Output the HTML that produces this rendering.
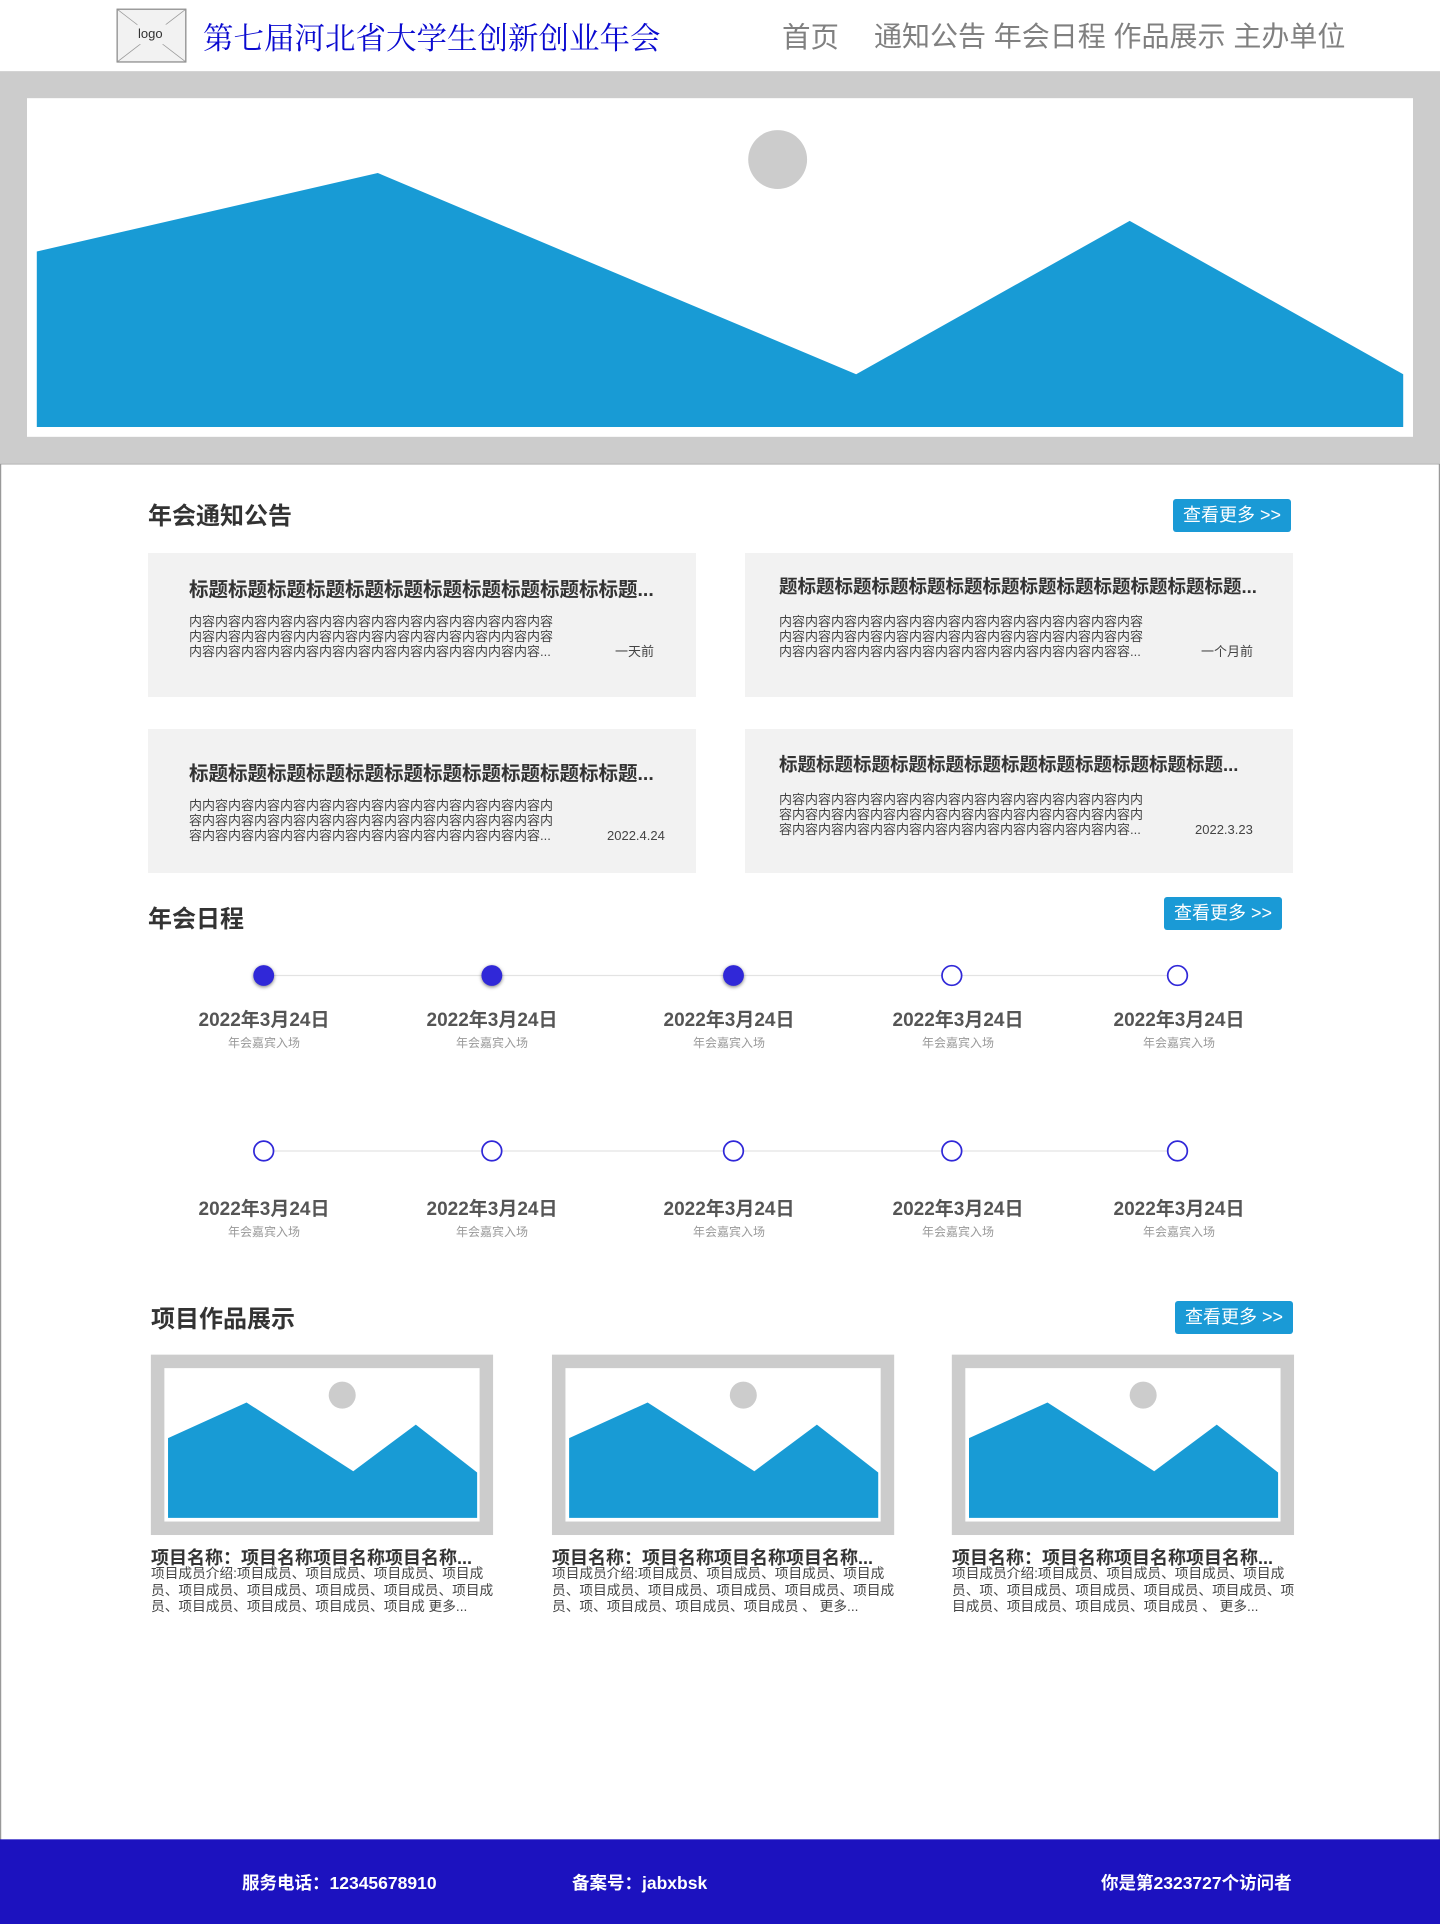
<!DOCTYPE html>
<html><head><meta charset="utf-8"><style>
*{margin:0;padding:0;box-sizing:border-box}
body{width:1440px;height:1924px;position:relative;background:#fff;font-family:"Liberation Sans","Noto Sans CJK SC",sans-serif;overflow:hidden}
.a{position:absolute;white-space:nowrap}
.h2{font-size:24px;font-weight:bold;color:#333;line-height:30px}
.btn{background:#1a9ad6;color:#fff;font-size:18px;border-radius:3px;text-align:center;line-height:33px}
.card{background:#f2f2f2;position:absolute;width:548px;height:144px}
.ct{position:absolute;left:41px;font-size:19.5px;font-weight:bold;color:#333;white-space:nowrap}
.cc{position:absolute;left:41px;font-size:13px;line-height:15px;color:#444;white-space:nowrap}
.tm{position:absolute;font-size:13px;color:#444;white-space:nowrap}
.d{position:absolute;width:170px;text-align:center;font-size:19px;font-weight:bold;color:#555;line-height:22px}
.s{position:absolute;width:170px;text-align:center;font-size:12px;color:#999;line-height:14px}
.pt{font-size:18px;font-weight:bold;color:#333}
.pd{font-size:13.7px;line-height:16.5px;color:#444;width:345px;white-space:normal}
.f{color:#fff;font-weight:bold;font-size:17.5px;line-height:20px}
</style></head><body>
<svg class="a" style="left:0;top:0" width="1440" height="1924" viewBox="0 0 1174 1568" preserveAspectRatio="none">
<rect x="95.5" y="7.5" width="56" height="43" fill="#f2f2f2" stroke="#888"/>
<line x1="95.5" y1="7.5" x2="151.5" y2="50.5" stroke="#999" stroke-width="0.6"/>
<line x1="151.5" y1="7.5" x2="95.5" y2="50.5" stroke="#999" stroke-width="0.6"/>
<rect x="112" y="20" width="24" height="16" fill="#f2f2f2"/>
<rect x="0.5" y="378" width="1173" height="1122" fill="none" stroke="#999" stroke-width="1"/>
<rect x="0" y="58" width="1174" height="320" fill="#ccc"/>
<rect x="22" y="80" width="1130" height="276" fill="#fff"/>
<polygon points="30,205 308,141 698,305 921,180 1144,305 1144,348 30,348" fill="#189bd5"/>
<circle cx="634" cy="130" r="24" fill="#ccc"/>
<line x1="215" y1="795" x2="960" y2="795" stroke="#e3e3e3" stroke-width="1"/>
<line x1="215" y1="938" x2="960" y2="938" stroke="#e3e3e3" stroke-width="1"/>
<g fill="#3028d8" style="filter:drop-shadow(0 1px 1.5px rgba(0,0,0,.5))">
<circle cx="215" cy="795" r="8.5"/><circle cx="401" cy="795" r="8.5"/><circle cx="598" cy="795" r="8.5"/></g>
<g fill="#fff" stroke="#3028d8" stroke-width="1.4">
<circle cx="776" cy="795" r="8"/><circle cx="960" cy="795" r="8"/>
<circle cx="215" cy="938" r="8"/><circle cx="401" cy="938" r="8"/><circle cx="598" cy="938" r="8"/><circle cx="776" cy="938" r="8"/><circle cx="960" cy="938" r="8"/></g>
<g id="im"><rect x="123" y="1104" width="279" height="147" fill="#ccc"/><rect x="134" y="1115" width="257" height="125" fill="#fff"/>
<polygon points="137,1172 201,1143 288,1199 339,1161 389,1200 389,1237 137,1237" fill="#189bd5"/><circle cx="279" cy="1137" r="11" fill="#ccc"/></g>
<use href="#im" x="327"/><use href="#im" x="653"/>
<rect x="0" y="1499" width="1174" height="69" fill="#1c12bf"/>
</svg>
<div class="a" style="left:138px;top:26px;font-size:13px;color:#333">logo</div>
<div class="a" style="left:203px;top:14px;font-size:30.5px;color:#0a0ad0;font-family:'Liberation Serif','Noto Serif CJK SC',serif">第七届河北省大学生创新创业年会</div>
<div class="a" style="left:782px;top:15px;font-size:28.5px;color:#808080">首页</div>
<div class="a" style="left:874px;top:15px;font-size:28px;color:#808080">通知公告 年会日程 作品展示 主办单位</div>

<div class="a h2" style="left:148px;top:502px">年会通知公告</div>
<div class="a btn" style="left:1173px;top:499px;width:118px">查看更多 &gt;&gt;</div>
<div class="card" style="left:148px;top:553px"><div class="ct" style="top:20px">标题标题标题标题标题标题标题标题标题标题标标题...</div><div class="cc" style="top:61px">内容内容内容内容内容内容内容内容内容内容内容内容内容内容<br>内容内容内容内容内内容内容内容内容内容内容内容内内容内容<br>内容内容内容内容内容内容内容内容内容内容内容内内容内容...</div><div class="tm" style="left:467px;top:88px">一天前</div></div>
<div class="card" style="left:745px;top:553px"><div class="ct" style="left:34px;top:20px;font-size:18.5px">题标题标题标题标题标题标题标题标题标题标题标题标题...</div><div class="cc" style="left:34px;top:61px">内容内容内容内容内容内容内容内容内容内容内容内容内容内容<br>内容内容内容内容内容内容内容内容内容内容内容内容内容内容<br>内容内容内容内容内容内容内容内容内容内容内容内容内容容...</div><div class="tm" style="left:456px;top:88px">一个月前</div></div>
<div class="card" style="left:148px;top:729px"><div class="ct" style="top:28px">标题标题标题标题标题标题标题标题标题标题标标题...</div><div class="cc" style="top:69px">内内容内容内容内容内容内容内容内容内容内容内容内容内容内<br>容内容内容内容内容内容内容内容内容内容内容内容内容内容内<br>容内容内容内容内容内容内容内容内容内容内容内容内容内容...</div><div class="tm" style="left:459px;top:99px">2022.4.24</div></div>
<div class="card" style="left:745px;top:729px"><div class="ct" style="left:34px;top:22px;font-size:18.5px">标题标题标题标题标题标题标题标题标题标题标题标题...</div><div class="cc" style="left:34px;top:63px">内容内容内容内容内容内容内容内容内容内容内容内容内容内内<br>容内容内容内容内容内容内容内容内容内容内容内容内容内容内<br>容内容内容内容内容内容内容内容内容内容内容内容内容内容...</div><div class="tm" style="left:450px;top:93px">2022.3.23</div></div>

<div class="a h2" style="left:148px;top:905px">年会日程</div>
<div class="a btn" style="left:1164px;top:897px;width:118px">查看更多 &gt;&gt;</div>

<div class="d" style="left:179px;top:1010px">2022年3月24日</div><div class="s" style="left:179px;top:1036px">年会嘉宾入场</div>
<div class="d" style="left:407px;top:1010px">2022年3月24日</div><div class="s" style="left:407px;top:1036px">年会嘉宾入场</div>
<div class="d" style="left:644px;top:1010px">2022年3月24日</div><div class="s" style="left:644px;top:1036px">年会嘉宾入场</div>
<div class="d" style="left:873px;top:1010px">2022年3月24日</div><div class="s" style="left:873px;top:1036px">年会嘉宾入场</div>
<div class="d" style="left:1094px;top:1010px">2022年3月24日</div><div class="s" style="left:1094px;top:1036px">年会嘉宾入场</div>
<div class="d" style="left:179px;top:1199px">2022年3月24日</div><div class="s" style="left:179px;top:1225px">年会嘉宾入场</div>
<div class="d" style="left:407px;top:1199px">2022年3月24日</div><div class="s" style="left:407px;top:1225px">年会嘉宾入场</div>
<div class="d" style="left:644px;top:1199px">2022年3月24日</div><div class="s" style="left:644px;top:1225px">年会嘉宾入场</div>
<div class="d" style="left:873px;top:1199px">2022年3月24日</div><div class="s" style="left:873px;top:1225px">年会嘉宾入场</div>
<div class="d" style="left:1094px;top:1199px">2022年3月24日</div><div class="s" style="left:1094px;top:1225px">年会嘉宾入场</div>

<div class="a h2" style="left:151px;top:1305px">项目作品展示</div>
<div class="a btn" style="left:1175px;top:1301px;width:118px">查看更多 &gt;&gt;</div>

<div class="a pt" style="left:151px;top:1544px">项目名称：项目名称项目名称项目名称...</div>
<div class="a pd" style="left:151px;top:1566px">项目成员介绍:项目成员、项目成员、项目成员、项目成员、项目成员、项目成员、项目成员、项目成员、项目成员、项目成员、项目成员、项目成员、项目成 更多...</div>
<div class="a pt" style="left:552px;top:1544px">项目名称：项目名称项目名称项目名称...</div>
<div class="a pd" style="left:552px;top:1566px">项目成员介绍:项目成员、项目成员、项目成员、项目成员、项目成员、项目成员、项目成员、项目成员、项目成员、项、项目成员、项目成员、项目成员 、 更多...</div>
<div class="a pt" style="left:952px;top:1544px">项目名称：项目名称项目名称项目名称...</div>
<div class="a pd" style="left:952px;top:1566px">项目成员介绍:项目成员、项目成员、项目成员、项目成员、项、项目成员、项目成员、项目成员、项目成员、项目成员、项目成员、项目成员、项目成员 、 更多...</div>

<div class="a f" style="left:242px;top:1873px">服务电话：12345678910</div>
<div class="a f" style="left:572px;top:1873px">备案号：jabxbsk</div>
<div class="a f" style="left:1101px;top:1873px">你是第2323727个访问者</div>
</body></html>
